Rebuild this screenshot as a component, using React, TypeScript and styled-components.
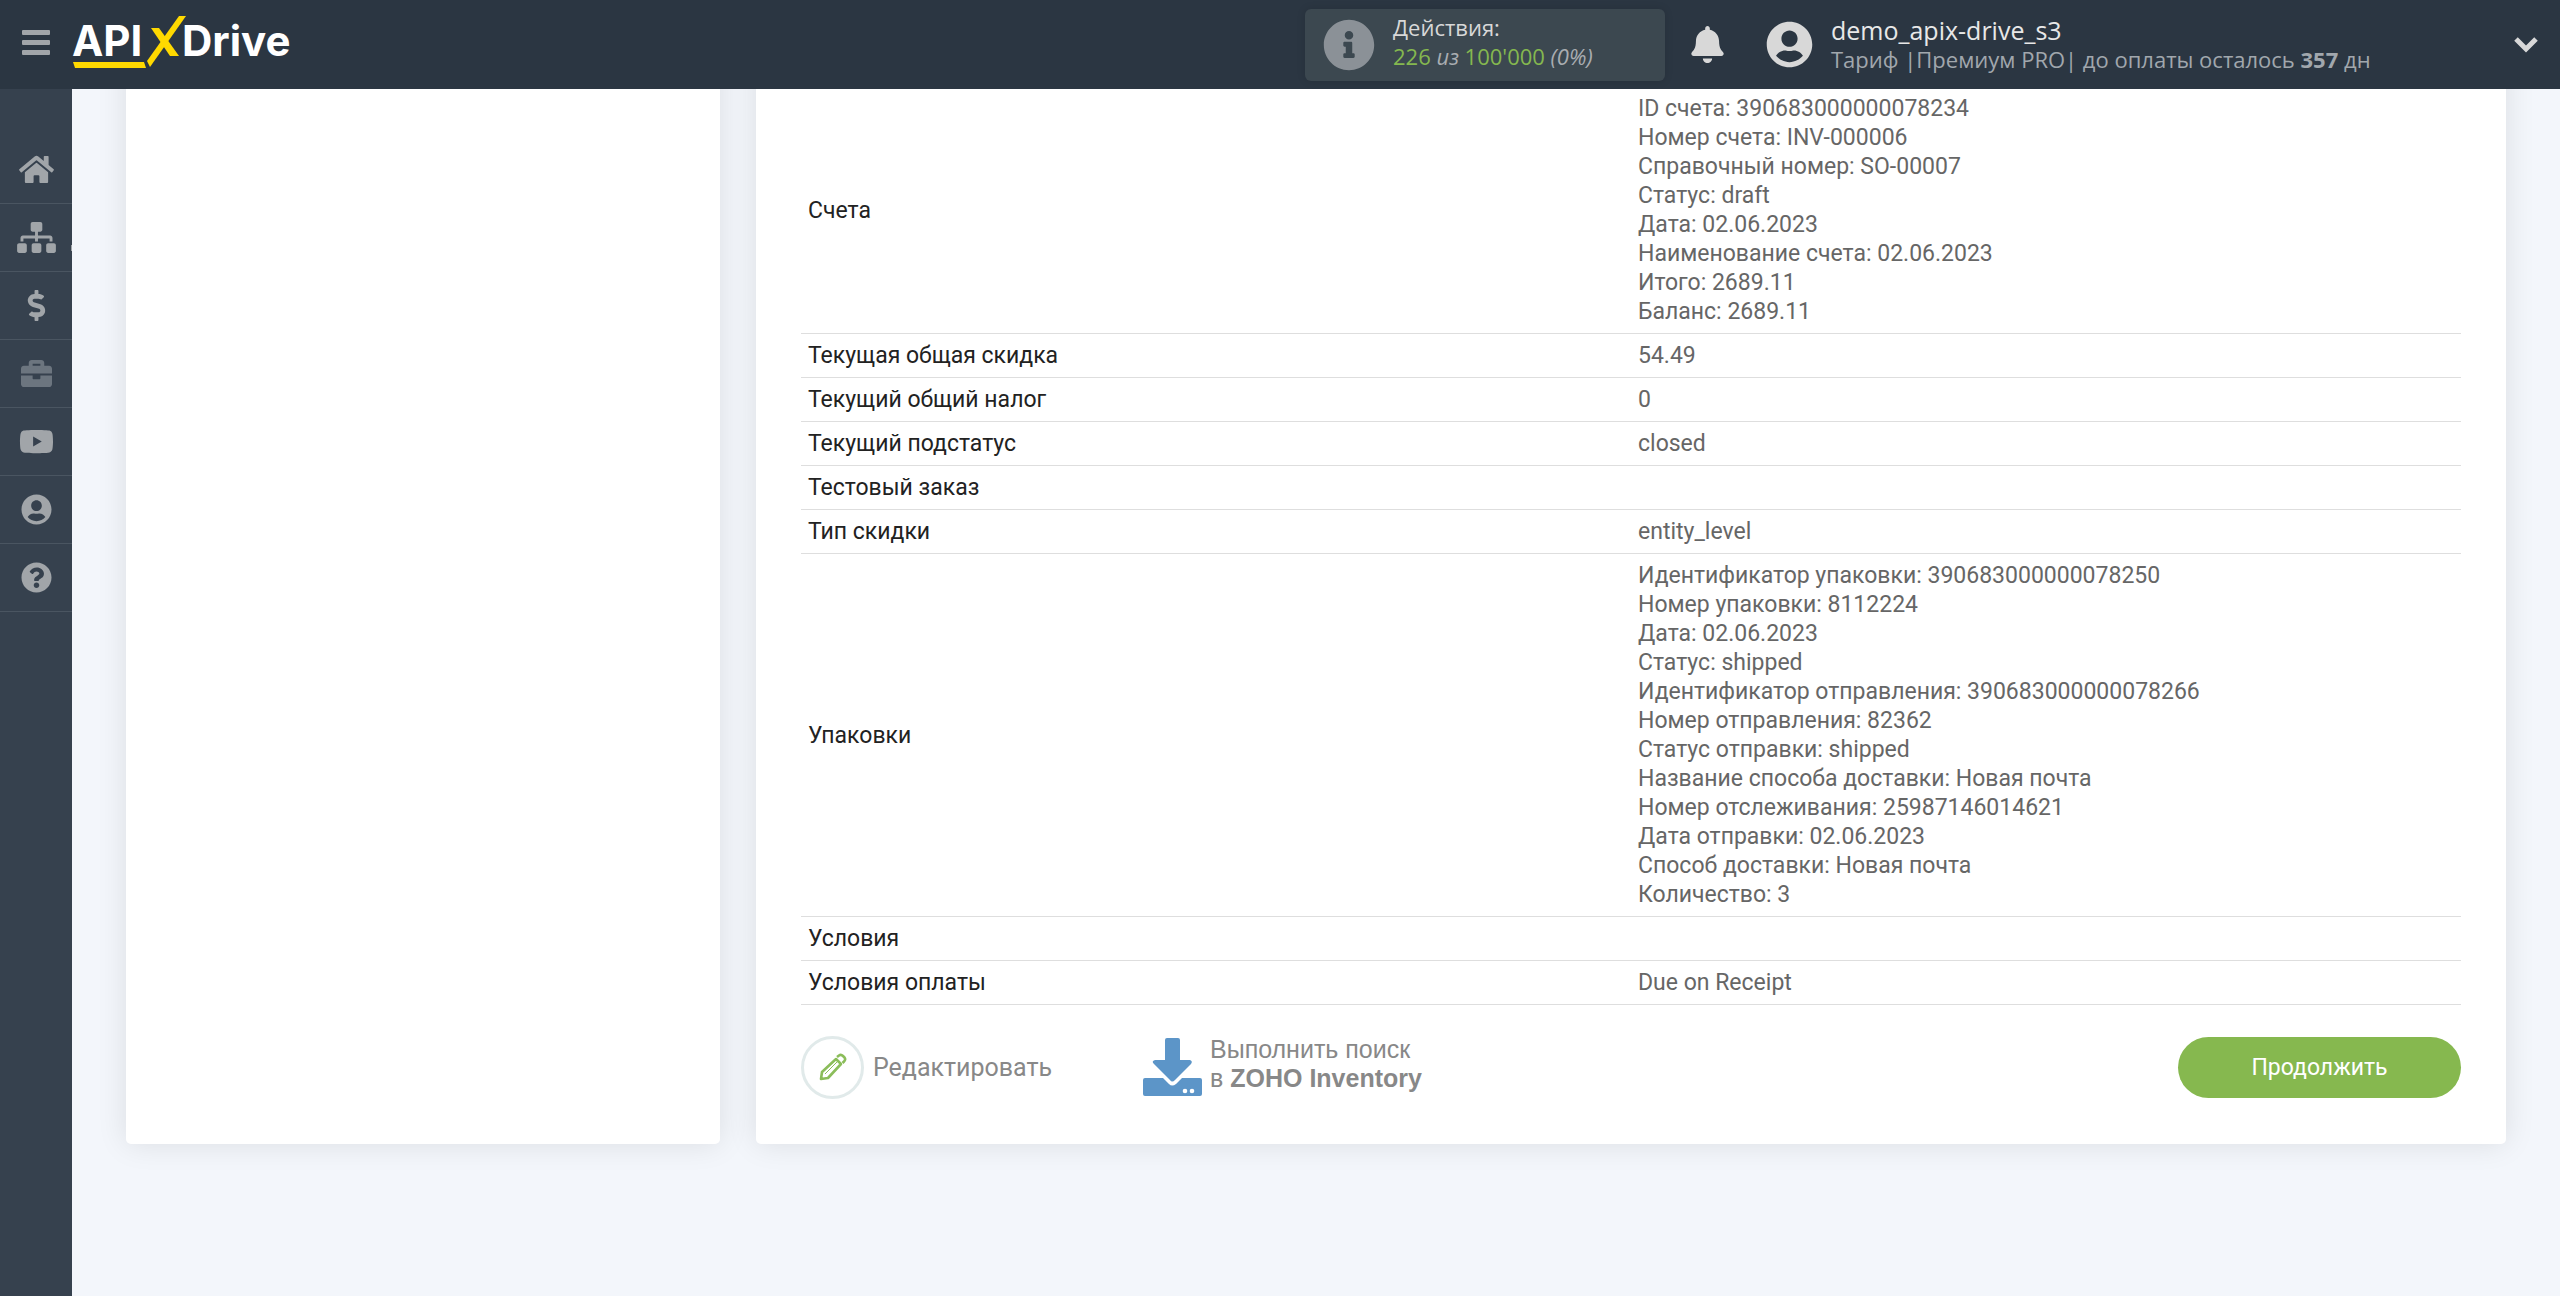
import React from "react";
import styled, { createGlobalStyle } from "styled-components";
import {
  FaBell,
  FaBriefcase,
  FaDollarSign,
  FaHome,
  FaInfoCircle,
  FaQuestionCircle,
  FaSitemap,
  FaUserCircle,
  FaYoutube,
} from "react-icons/fa";

const GlobalStyle = createGlobalStyle`
  * { box-sizing: border-box; }
  body {
    margin: 0;
    background: #f3f6fb;
    font-family: Roboto, "Liberation Sans", sans-serif;
    font-size: 23px;
    line-height: 29px;
  }
  button {
    font: inherit;
    color: inherit;
    background: none;
    border: 0;
    padding: 0;
    cursor: pointer;
  }
  svg { display: block; }
`;

const Header = styled.header`
  position: fixed;
  z-index: 2;
  top: 0;
  left: 0;
  right: 0;
  height: 89px;
  display: flex;
  align-items: center;
  padding: 0 22px;
  background: #2b3642;
  color: #d8d8d8;
  font-family: "Open Sans", "Noto Sans", sans-serif;
`;

const MenuButton = styled.button`
  display: grid;
  gap: 5px;
  width: 28px;
  margin: 0 22px 5px 0;

  span {
    height: 5px;
    border-radius: 1px;
    background: #a1a5a9;
  }
`;

const LogoLink = styled.a`
  flex: 1;
  text-decoration: none;
`;

const Actions = styled.section`
  display: flex;
  align-items: center;
  gap: 18px;
  width: 360px;
  height: 72px;
  padding: 0 18px;
  border-radius: 6px;
  background: #3c4850;
  box-shadow: 0 0 8px rgba(0, 0, 0, 0.12);

  > svg {
    color: #8b9197;
  }
`;

const TextPair = styled.div`
  display: grid;
  font-size: 22px;
`;

const ActionsText = styled(TextPair)`
  padding-bottom: 5px;
`;

const Usage = styled.span`
  color: #a9adb1;
  font-style: italic;

  b {
    color: #85b84f;
    font-style: normal;
    font-weight: 400;
  }
`;

const BellButton = styled.button`
  margin: 0 40px 0 24px;
  color: #d8d8d8;
`;

const Account = styled.section`
  display: flex;
  align-items: center;
  gap: 18px;
  width: 748px;
`;

const UserName = styled.span`
  font-size: 25px;
  color: #e8e8e8;
`;

const Plan = styled.span`
  color: #a1a7ad;
`;

const Sidebar = styled.nav`
  position: fixed;
  z-index: 1;
  top: 89px;
  bottom: 0;
  left: 0;
  width: 72px;
  padding-top: 47px;
  background: #36414e;
`;

const SideLink = styled.a<{ $dim?: boolean; $marked?: boolean }>`
  display: flex;
  align-items: center;
  justify-content: center;
  position: relative;
  height: 68px;
  border-bottom: 1px solid #4a5561;
  color: ${(p) => (p.$dim ? "#6c757f" : "#a1a5a9")};

  svg {
    width: 39px;
    height: 31px;
  }

  &::after {
    content: "";
    display: ${(p) => (p.$marked ? "block" : "none")};
    position: absolute;
    right: 0;
    bottom: 20px;
    width: 1px;
    height: 6px;
    background: #a1a5a9;
  }
`;

const Main = styled.main`
  display: grid;
  grid-template-columns: 594fr 1750fr;
  gap: 36px;
  padding: 56px 54px 153px 126px;
`;

const Card = styled.section`
  padding: 31px 45px 45px;
  border-radius: 5px;
  background: #fff;
  box-shadow: 0 0 30px rgba(0, 0, 0, 0.1);
`;

const DataTable = styled.table`
  width: 100%;
  table-layout: fixed;
  border-collapse: separate;
  border-spacing: 0;

  th,
  td {
    padding: 7px;
    border-bottom: 1px solid #dedede;
    text-align: left;
    font-weight: 400;
  }
  th {
    color: #222;
  }
  td {
    color: #666;
  }
`;

const Line = styled.div``;

const Footer = styled.footer`
  display: flex;
  align-items: center;
  margin-top: 30px;
  color: #888;
`;

const EditButton = styled.button`
  display: flex;
  align-items: center;
  gap: 9px;
  width: 342px;
  font-size: 25px;
`;

const EditCircle = styled.span`
  display: grid;
  place-items: center;
  width: 63px;
  height: 63px;
  border: 3px solid #e1eaea;
  border-radius: 50%;
`;

const SearchButton = styled.button`
  display: flex;
  align-items: center;
  gap: 8px;
  font-family: "Liberation Sans", Arial, sans-serif;
  font-size: 25px;
  text-align: left;

  > span {
    padding-bottom: 6px;
  }
`;

const ContinueButton = styled.button`
  width: 283px;
  height: 61px;
  margin-left: auto;
  border-radius: 31px;
  background: #86b84f;
  color: #fff;
`;

const rows: { label: string; values: string[] }[] = [
  {
    label: "Счета",
    values: [
      "ID счета: 390683000000078234",
      "Номер счета: INV-000006",
      "Справочный номер: SO-00007",
      "Статус: draft",
      "Дата: 02.06.2023",
      "Наименование счета: 02.06.2023",
      "Итого: 2689.11",
      "Баланс: 2689.11",
    ],
  },
  { label: "Текущая общая скидка", values: ["54.49"] },
  { label: "Текущий общий налог", values: ["0"] },
  { label: "Текущий подстатус", values: ["closed"] },
  { label: "Тестовый заказ", values: [] },
  { label: "Тип скидки", values: ["entity_level"] },
  {
    label: "Упаковки",
    values: [
      "Идентификатор упаковки: 390683000000078250",
      "Номер упаковки: 8112224",
      "Дата: 02.06.2023",
      "Статус: shipped",
      "Идентификатор отправления: 390683000000078266",
      "Номер отправления: 82362",
      "Статус отправки: shipped",
      "Название способа доставки: Новая почта",
      "Номер отслеживания: 25987146014621",
      "Дата отправки: 02.06.2023",
      "Способ доставки: Новая почта",
      "Количество: 3",
    ],
  },
  { label: "Условия", values: [] },
  { label: "Условия оплаты", values: ["Due on Receipt"] },
];

const sideItems = [
  { name: "Главная", Icon: FaHome },
  { name: "Связи", Icon: FaSitemap, marked: true },
  { name: "Оплата", Icon: FaDollarSign },
  { name: "Проекты", Icon: FaBriefcase, dim: true },
  { name: "Видео", Icon: FaYoutube },
  { name: "Профиль", Icon: FaUserCircle },
  { name: "Помощь", Icon: FaQuestionCircle },
];

const Logo = () => (
  <svg width="224" height="89" viewBox="0 0 224 89" fontFamily="Inter, sans-serif" fontSize="42" fontWeight="700" fill="#fff">
    <text x="0" y="56">API</text>
    <text x="110" y="56">Drive</text>
    <g fill="#ffd900">
      <path d="M1 62H72L74 68H3Z" />
      <path d="M79 28H87L107 56H98Z" />
      <path d="M107 16H114L78 67L75 61Z" />
    </g>
  </svg>
);

const PencilIcon = () => (
  <svg width="28" height="28" viewBox="0 0 28 28" fill="none" stroke="#8bbd5a" strokeWidth="2.6" strokeLinejoin="round">
    <path d="M2 26L3 19L17 6L22 11L9 25Z" />
    <path d="M18 4L20 2.500Q22 1 24 3L25.500 4.500Q27 6.500 25 8.500L23.500 10" />
    <path d="M6 21L18 9" strokeWidth="1" />
  </svg>
);

const DownloadIcon = () => (
  <svg width="59" height="58" viewBox="0 0 59 58" fill="#5c95c8">
    <path d="M24 0H35Q37 0 37 2V22H47Q50 23 48 26L32 42Q29 45 27 42L11 26Q8 23 12 22H22V2Q22 0 24 0Z" />
    <path d="M2 40H20L26 46Q29 49 33 46L39 40H57Q59 40 59 42V56Q59 58 57 58H2Q0 58 0 56V42Q0 40 2 40Z" />
    <circle cx="42" cy="53" r="2.3" fill="#fff" />
    <circle cx="49" cy="53" r="2.3" fill="#fff" />
  </svg>
);

const ChevronIcon = () => (
  <svg width="24" height="16" viewBox="0 0 24 16" fill="none" stroke="currentColor" strokeWidth="5">
    <path d="M2 2L12 12L22 2" />
  </svg>
);

export default function App() {
  return (
    <>
      <GlobalStyle />
      <Header>
        <MenuButton aria-label="Меню">
          <span />
          <span />
          <span />
        </MenuButton>
        <LogoLink href="#" aria-label="APIXDrive">
          <Logo />
        </LogoLink>
        <Actions>
          <FaInfoCircle size={52} />
          <ActionsText>
            <span>Действия:</span>
            <Usage>
              <b>226</b> из <b>100'000</b> (0%)
            </Usage>
          </ActionsText>
        </Actions>
        <BellButton aria-label="Уведомления">
          <FaBell size={37} />
        </BellButton>
        <Account>
          <FaUserCircle size={47} />
          <TextPair>
            <UserName>demo_apix-drive_s3</UserName>
            <Plan>
              Тариф |Премиум PRO| до оплаты осталось <b>357</b> дн
            </Plan>
          </TextPair>
        </Account>
        <button aria-label="Развернуть">
          <ChevronIcon />
        </button>
      </Header>
      <Sidebar>
        {sideItems.map(({ name, Icon, dim, marked }) => (
          <SideLink key={name} href="#" aria-label={name} $dim={dim} $marked={marked}>
            <Icon />
          </SideLink>
        ))}
      </Sidebar>
      <Main>
        <Card />
        <Card>
          <DataTable>
            <tbody>
              {rows.map((row) => (
                <tr key={row.label}>
                  <th scope="row">{row.label}</th>
                  <td>
                    {row.values.map((value) => (
                      <Line key={value}>{value}</Line>
                    ))}
                  </td>
                </tr>
              ))}
            </tbody>
          </DataTable>
          <Footer>
            <EditButton>
              <EditCircle>
                <PencilIcon />
              </EditCircle>
              Редактировать
            </EditButton>
            <SearchButton>
              <DownloadIcon />
              <span>
                Выполнить поиск
                <br />в <b>ZOHO Inventory</b>
              </span>
            </SearchButton>
            <ContinueButton>Продолжить</ContinueButton>
          </Footer>
        </Card>
      </Main>
    </>
  );
}
